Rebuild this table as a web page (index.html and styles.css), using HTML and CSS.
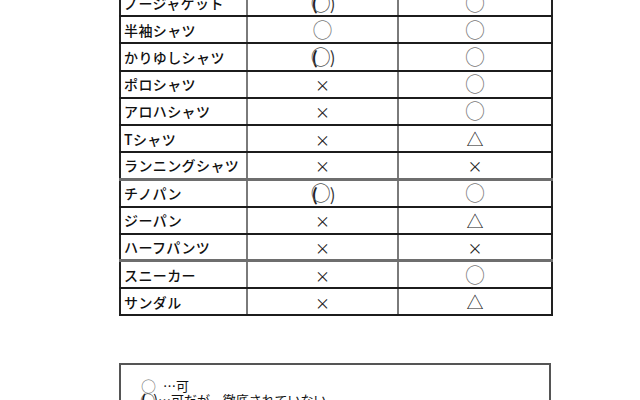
FILE: index.html
```html
<!DOCTYPE html>
<html lang="ja">
<head>
<meta charset="utf-8">
<link rel="stylesheet" href="styles.css">
</head>
<body>
<div class="page">
  <table class="grid">
    <colgroup><col class="c1"><col class="c2"><col class="c3"></colgroup>
    <tbody>
      <tr><td class="name">ノージャケット</td><td><span class="mk paren"><span class="pl">(</span><span class="ci">○</span><span class="pr">)</span></span></td><td><span class="mk ci">○</span></td></tr>
      <tr><td class="name">半袖シャツ</td><td><span class="mk ci">○</span></td><td><span class="mk ci">○</span></td></tr>
      <tr><td class="name">かりゆしシャツ</td><td><span class="mk paren"><span class="pl">(</span><span class="ci">○</span><span class="pr">)</span></span></td><td><span class="mk ci">○</span></td></tr>
      <tr><td class="name">ポロシャツ</td><td><span class="mk x">×</span></td><td><span class="mk ci">○</span></td></tr>
      <tr><td class="name">アロハシャツ</td><td><span class="mk x">×</span></td><td><span class="mk ci">○</span></td></tr>
      <tr><td class="name">Tシャツ</td><td><span class="mk x">×</span></td><td><span class="mk tri">△</span></td></tr>
      <tr><td class="name">ランニングシャツ</td><td><span class="mk x">×</span></td><td><span class="mk x">×</span></td></tr>
      <tr class="sep"><td class="name">チノパン</td><td><span class="mk paren"><span class="pl">(</span><span class="ci">○</span><span class="pr">)</span></span></td><td><span class="mk ci">○</span></td></tr>
      <tr><td class="name">ジーパン</td><td><span class="mk x">×</span></td><td><span class="mk tri">△</span></td></tr>
      <tr><td class="name">ハーフパンツ</td><td><span class="mk x">×</span></td><td><span class="mk x">×</span></td></tr>
      <tr class="sep"><td class="name">スニーカー</td><td><span class="mk x">×</span></td><td><span class="mk ci">○</span></td></tr>
      <tr><td class="name">サンダル</td><td><span class="mk x">×</span></td><td><span class="mk tri">△</span></td></tr>
    </tbody>
  </table>

  <div class="legend">
    <p class="lg-line"><span class="lg-ci">○</span><span class="lg-t">…可</span></p>
    <p class="lg-line"><span class="lg-paren"><span class="pl">(</span><span class="ci">○</span><span class="pr">)</span></span><span class="lg-t2">…可だが、徹底されていない</span></p>
  </div>
</div>
</body>
</html>
```

FILE: styles.css
```css
html, body {
  margin: 0;
  padding: 0;
  background: #ffffff;
}

.page {
  width: 640px;
  height: 400px;
  overflow: hidden;
  padding-left: 119px;
  box-sizing: border-box;
  font-family: "Noto Sans CJK JP", sans-serif;
  color: #111;
}

.grid {
  border-collapse: collapse;
  width: 432px;
  margin-top: -12px;
  table-layout: fixed;
}

.c1 { width: 127px; }
.c2 { width: 151px; }
.c3 { width: 154px; }

.grid tr {
  height: 27.2px;
}

.grid td {
  border-top: 2px solid #1c1c1c;
  border-bottom: 2px solid #1c1c1c;
  border-left: 2px solid #7a7a7a;
  border-right: 2px solid #7a7a7a;
  padding: 0;
  text-align: center;
  vertical-align: middle;
  line-height: 1;
}

.grid td:first-child {
  border-left-color: #222;
}

.grid td:last-child {
  border-right-color: #222;
}

.grid tr.sep td {
  border-top: 3px solid #6e6e6e;
}

.grid td.name {
  text-align: left;
  padding-left: 3px;
  font-size: 14px;
  font-weight: 500;
  letter-spacing: 0.4px;
}

.mk {
  display: inline-block;
  line-height: 1;
}

.ci {
  font-size: 20px;
  color: #7a7a7a;
}

.x {
  font-size: 15px;
  color: #222;
}

.tri {
  font-size: 17px;
  color: #222;
}

.paren {
  display: inline-flex;
  align-items: center;
  margin-left: 2px;
}

.paren .pl {
  font-size: 17px;
  font-weight: 700;
  color: #222;
  margin-right: -7px;
}

.paren .ci {
  font-size: 20px;
  color: #555;
}

.paren .pr {
  font-size: 17px;
  color: #333;
  margin-left: -1px;
}

.legend {
  width: 432px;
  box-sizing: border-box;
  margin-top: 47px;
  border: 2px solid #555;
  border-bottom: none;
  height: 60px;
  padding: 13px 0 0 20px;
  font-family: "Noto Sans CJK JP", serif;
  font-size: 13px;
  color: #111;
}

.lg-line {
  margin: 0;
  display: flex;
  align-items: center;
  height: 14px;
}

.lg-ci {
  font-size: 15px;
  color: #777;
  width: 22px;
}

.lg-paren {
  display: inline-flex;
  align-items: center;
}

.lg-paren .pl {
  font-size: 14px;
  font-weight: 700;
  margin-right: -6px;
}

.lg-paren .ci {
  font-size: 15px;
  color: #444;
}

.lg-paren .pr {
  font-size: 14px;
  margin-left: -2px;
}

.lg-t, .lg-t2 {
  font-size: 13px;
}
```
